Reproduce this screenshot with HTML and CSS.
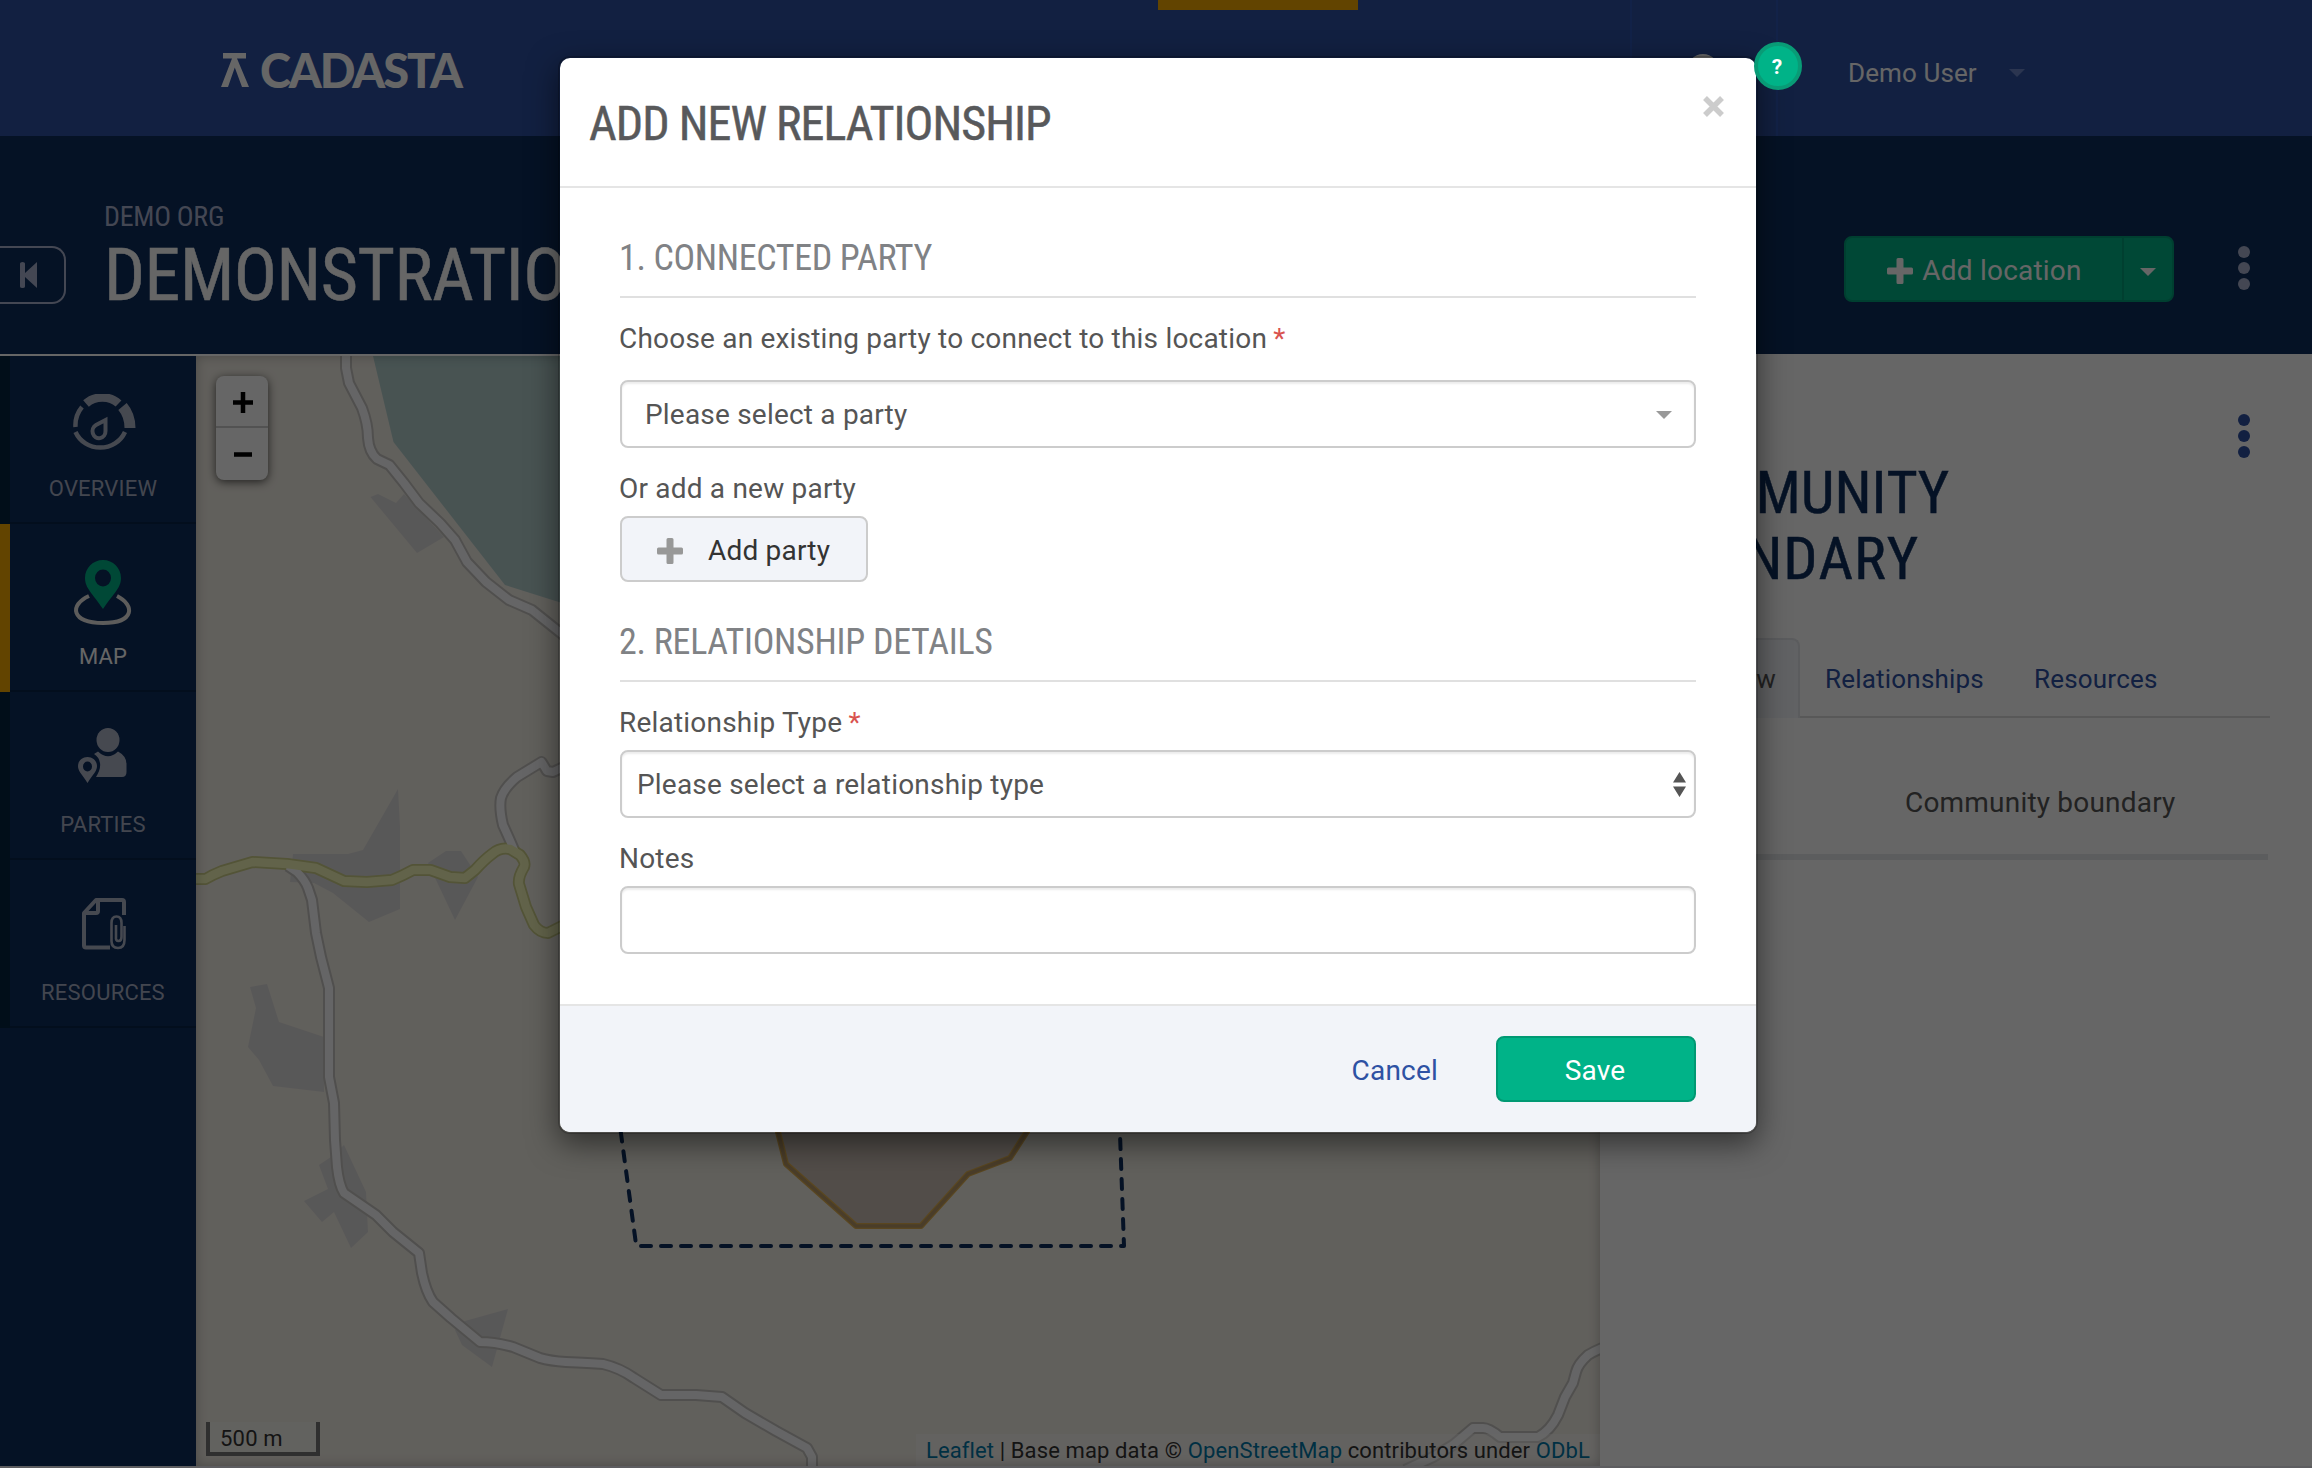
FILE: index.html
```html
<!DOCTYPE html>
<html lang="en">
<head>
<meta charset="utf-8">
<title>Cadasta – Add new relationship</title>
<link rel="stylesheet" href="styles.css">
</head>
<body>
<div class="page">
  <header class="topbar">
    <a class="logo">
      <svg class="logo-mark" width="28" height="34" viewBox="0 0 28 34"><path d="M2 0H25V5.500H2Z M11 5.500H16L28 34H21L13.800 14.500L7 34H0Z" fill="#fff"/></svg>
      <span class="logo-text">CADASTA</span>
    </a>
    <span class="nav-current"></span>
    <span class="nav-lang"><span class="globe"></span></span>
    <span class="nav-user">Demo User<i class="caret caret-user"></i></span>
  </header>

  <section class="project">
    <button class="collapse"><svg width="18" height="26" viewBox="0 0 18 26"><path d="M0 1.500Q0 0 2.500 0T5 1.500V11L17 0V26L5 15V24.500Q5 26 2.500 26T0 24.500Z" fill="#aab2cf"/></svg></button>
    <div class="project-names">
      <div class="org">DEMO ORG</div>
      <h1 class="project-title">DEMONSTRATION</h1>
    </div>
    <div class="split">
      <button class="split-main"><svg width="26" height="26" viewBox="0 0 26 26"><path d="M11 0H15Q16.500 0 16.500 1.500V9.500H24.500Q26 9.500 26 11V15Q26 16.500 24.500 16.500H16.500V24.500Q16.500 26 15 26H11Q9.500 26 9.500 24.500V16.500H1.500Q0 16.500 0 15V11Q0 9.500 1.500 9.500H9.500V1.500Q9.500 0 11 0Z" fill="#fff"/></svg>Add location</button>
      <button class="split-toggle"><i class="caret"></i></button>
    </div>
    <div class="kebab kebab-light"><i></i><i></i><i></i></div>
  </section>

  <main class="content">
    <nav class="sidebar">
      <a class="side-item overview">
        <svg width="63" height="60" viewBox="0 0 63 60" fill="none" stroke="#b0b6c9">
          <path d="M2.500 33A27 28 0 0 1 9 13" stroke-width="4.500"/><path d="M2.500 38A27 26 0 0 0 52 38" stroke-width="4.500"/>
          <path d="M13 9.500C22 1.500 37 1.500 45.500 9.500" stroke-width="8.500"/><path d="M49.500 12.500C55 19 57 25 57 34" stroke-width="11"/>
          <path d="M32.500 26V37A6.500 7 0 1 1 23 31Z" stroke-width="4"/>
        </svg>
        <span>OVERVIEW</span>
      </a>
      <a class="side-item active">
        <svg width="63" height="66" viewBox="0 0 63 66">
          <path d="M17 36C-3 45 -1 63 31 63S63 45 45 36" fill="none" stroke="#e8e6e4" stroke-width="4"/>
          <path fill-rule="evenodd" d="M31 0C41 0 49 8 49 18C49 28 42 33 31 49C20 33 13 28 13 18C13 8 21 0 31 0ZM31 9.500A8 8.500 0 1 0 31 26.500A8 8.500 0 1 0 31 9.500Z" fill="#00b388"/>
        </svg>
        <span>MAP</span>
      </a>
      <a class="side-item parties">
        <svg width="50" height="56" viewBox="0 0 50 56" fill="#b0b6c9">
          <ellipse cx="30" cy="12" rx="11.500" ry="12"/>
          <path d="M16 26L20 23.500Q30 33 40 23.500Q48.500 28 48.500 36V44Q48.500 49 44 49H18Q23 41 22 35Q21 29 16 26Z"/>
          <path fill-rule="evenodd" d="M9.500 29C15 29 19 33 19 38C19 43 16 45 9.500 55C3 45 0 43 0 38C0 33 4 29 9.500 29ZM9.500 33.500A4.500 5 0 1 0 9.500 43.500A4.500 5 0 1 0 9.500 33.500Z"/>
        </svg>
        <span>PARTIES</span>
      </a>
      <a class="side-item resources">
        <svg width="46" height="52" viewBox="0 0 46 52" fill="none" stroke="#b0b6c9" stroke-width="4" stroke-linejoin="round">
          <path d="M28 49.500H4Q2 49.500 2 47.500V15L14 2H40Q42 2 42 4V17"/><path d="M2 15H14Q16 15 16 13V2"/>
          <path d="M42.500 28V42Q42.500 50 36 50T29.500 43V25Q29.500 18.500 34.500 18.500T39.500 25V39Q39.500 43 36.500 43T34 39V27" stroke-width="2.600"/>
        </svg>
        <span>RESOURCES</span>
      </a>
    </nav>

    <section class="map">
      <svg class="map-canvas" width="1404" height="1110" viewBox="196 356 1404 1110" fill="none" stroke-linejoin="round">
        <defs>
          <path id="road-north" d="M346 350L346 368L349 383L362 408Q368 424 368 438Q369 452 377 459L389.500 465L404 483L419 503L440 523L455 540L467 562L486 582L509 600L532 610L562 634L600 665"/>
          <path id="road-south" d="M288 866L297 872Q305 880 308 888L312 900L316 933L321 957L329 988V1077L334 1103L335 1140L337 1167Q339 1185 344 1193L376 1215L393 1232L419 1253L422 1273Q426 1292 433 1302L451 1318L480 1342Q495 1342 513 1347L540 1358Q550 1361 566 1362Q590 1363 603 1364Q620 1368 634 1378L661 1395H696L722 1397L745 1413L776 1431L807 1448L812 1457V1470"/>
          <path id="road-loop" d="M515 852Q509 838 503 825Q499 808 501 798Q504 788 517 777L541.500 762L547 771L553 772L570 764"/>
          <path id="road-east" d="M1610 1345Q1596 1350 1588 1355Q1578 1364 1576 1372L1573 1383L1565 1397L1558 1415Q1550 1431 1538 1437H1500Q1489 1428 1483 1428H1473L1453 1445L1433 1457L1405 1470"/>
          <path id="road-main" d="M190 879H205.500Q212 875 222 871L252.500 862L287 864L316 868L344 881L367 882L392 880Q402 876 413 870H430.500L450 877L465 878L475 870Q484 860 492 854Q500 847 510 849L520 855Q526 862 524 867Q518 877 519 884L526 907L534 925Q540 933 548 933L562 926L600 910"/>
        </defs>
        <rect x="196" y="356" width="1404" height="1110" fill="#f3efe6"/>
        <path d="M373 356L393.500 442L505 585L600 615V356Z" fill="#b3d0ce"/>
        <g fill="#dddcdc">
          <path d="M370.500 497L378 494L396 503L404 494L444 537L417 553Z"/>
          <path d="M293 854H348L363 850L398 789L400 827V909L369 922L333 893L314 883L290 882Z"/>
          <path d="M428 863L446 851H461L478 877L455 920Z"/>
          <path d="M250 987L267 984L279 1022L324 1037V1092L273 1086L259 1060L248 1047L256 1008Z"/>
          <path d="M344 1145L366 1192L368 1232L351 1248L334 1212L322 1222L304 1201L328 1189L319 1165L331 1157Z"/>
          <path d="M508 1309L492 1367L462 1345L455 1330L465 1321Z"/>
        </g>
        <g stroke="#c8c6c2" stroke-width="12"><use href="#road-north"/><use href="#road-south"/><use href="#road-loop"/><use href="#road-east"/></g>
        <use href="#road-main" stroke="#cfd18a" stroke-width="12"/>
        <g stroke="#fdfdfe" stroke-width="8"><use href="#road-north"/><use href="#road-south"/><use href="#road-loop"/><use href="#road-east"/></g>
        <use href="#road-main" stroke="#f5f8ba" stroke-width="8.500"/>
        <path d="M770 1100L778 1132L786 1164L856 1226H921L968 1174L1010 1158L1028 1130L1045 1100Z" fill="#cdc0b6" stroke="#e0b050" stroke-width="6"/>
        <path d="M770 1100L778 1132L786 1164L856 1226H921L968 1174L1010 1158L1028 1130L1045 1100Z" stroke="#b89a66" stroke-width="3.500"/>
        <g stroke="#0d2d5c" stroke-width="4" stroke-dasharray="10 10" stroke-linecap="round">
          <path d="M641 1246H1124L1117 1050"/><path d="M635.500 1240.500L611 1060"/>
        </g>
      </svg>
      <div class="map-zoom"><button>
        <svg width="20" height="21" viewBox="0 0 20 21"><path d="M0 10.500H20M10 0V21" stroke="#000" stroke-width="4.500"/></svg></button><button>
        <svg width="20" height="21" viewBox="0 0 20 21"><path d="M1 10.500H19" stroke="#000" stroke-width="4.500"/></svg></button></div>
      <div class="map-scale">500 m</div>
      <div class="map-credit"><a>Leaflet</a> | Base map data © <a>OpenStreetMap</a> contributors under <a>ODbL</a></div>
    </section>

    <aside class="detail">
      <div class="detail-head">
        <div>
          <div class="detail-kind">LOCATION</div>
          <h2 class="detail-title">COMMUNITY<br><span class="detail-title-end">BOUNDARY</span></h2>
        </div>
        <div class="kebab kebab-blue"><i></i><i></i><i></i></div>
      </div>
      <div class="tabs"><a class="tab current">Overview</a><a class="tab">Relationships</a><a class="tab">Resources</a></div>
      <div class="attr"><span class="attr-name">Type</span><span>Community boundary</span></div>
    </aside>
  </main>
</div>

<div class="backdrop">
  <div class="modal">
    <div class="modal-head">
      <h3>ADD NEW RELATIONSHIP</h3>
      <svg class="close" width="21" height="21" viewBox="0 0 21 21"><path d="M2 2L19 19M19 2L2 19" stroke="#ccc" stroke-width="5.500"/></svg>
    </div>
    <div class="modal-body">
      <h4>1. CONNECTED PARTY</h4>
      <label class="label-wide">Choose an existing party to connect to this location <em>*</em></label>
      <div class="field field-combo">Please select a party<i class="caret"></i></div>
      <label>Or add a new party</label>
      <button class="btn btn-add"><svg width="26" height="26" viewBox="0 0 26 26"><path d="M11 0H15Q16.500 0 16.500 1.500V9.500H24.500Q26 9.500 26 11V15Q26 16.500 24.500 16.500H16.500V24.500Q16.500 26 15 26H11Q9.500 26 9.500 24.500V16.500H1.500Q0 16.500 0 15V11Q0 9.500 1.500 9.500H9.500V1.500Q9.500 0 11 0Z" fill="#989898"/></svg>Add party</button>
      <h4 class="second">2. RELATIONSHIP DETAILS</h4>
      <label>Relationship Type <em>*</em></label>
      <div class="field field-select">Please select a relationship type<svg width="13" height="25" viewBox="0 0 13 25"><path d="M6.500 0L13 10.500H0ZM6.500 25L13 14.500H0Z" fill="#555"/></svg></div>
      <label>Notes</label>
      <div class="field"></div>
    </div>
    <div class="modal-foot">
      <a class="cancel">Cancel</a>
      <button class="btn btn-save">Save</button>
    </div>
  </div>
  <div class="help">?</div>
</div>
</body>
</html>
```
FILE: styles.css
```css
* { box-sizing: border-box; }
body {
  margin: 0;
  font: 400 28px/40px Roboto, sans-serif;
  letter-spacing: .2px;
  color: #555;
}
h1, h2, h3, h4 { margin: 0; font-family: "Roboto Condensed", Roboto, sans-serif; font-weight: 400; letter-spacing: 0; }
h1, h2, h3 { -webkit-text-stroke: .5px currentColor; }
button { margin: 0; padding: 0; border: 0; background: none; font: inherit; letter-spacing: inherit; color: inherit; }
svg { display: block; flex: none; }
em { font-style: normal; color: #d9534f; }

.page { width: 2312px; height: 1468px; display: flex; flex-direction: column; overflow: hidden; background: #e9e9f0; }
.caret { display: block; width: 0; height: 0; border: 8px solid transparent; border-top-color: #fff; border-bottom: 0; }

/* top bar */
.topbar { height: 136px; flex: none; display: flex; background: #2d50a3; color: #fff; }
.logo { width: 1158px; padding: 53px 0 0 221px; display: flex; gap: 11px; flex: none; }
.logo-text { font: 900 47px/35px Lato, sans-serif; letter-spacing: -2.100px; }
.nav-current { width: 200px; height: 10px; background: #f5ab00; flex: none; }
.nav-lang { margin-left: 272px; width: 148px; flex: none; border: solid #2f55b4; border-width: 0 2px; padding: 54px 0 0 55px; }
.globe { display: block; width: 32px; height: 32px; border-radius: 50%; background: #fff; }
.nav-user { display: flex; align-items: center; gap: 32px; margin: 10px 0 0 70px; font-size: 26px; letter-spacing: .1px; }
.caret-user { border-top-color: #6c86c8; }

/* project header */
.project { height: 220px; flex: none; display: flex; background: #0d2d5c; border-bottom: 2px solid #fff; color: #fff; }
.collapse { width: 66px; height: 58px; margin-top: 110px; border: solid #aab2cf; border-width: 2px 2px 2px 0; border-radius: 0 14px 14px 0; padding-left: 20px; }
.project-names { width: 1778px; padding: 57px 0 0 38px; }
.org { font: 400 28px/48px "Roboto Condensed", Roboto, sans-serif; color: #aab2cf; letter-spacing: -.3px; }
.project-title { font-size: 72px; line-height: 70px; letter-spacing: -.5px; }
.split { display: flex; height: 66px; margin-top: 100px; background: #00b388; border: 2px solid #009e78; border-radius: 8px; }
.split-main { width: 278px; display: flex; align-items: center; justify-content: center; gap: 9px; padding: 3px 0 0 1px; border-right: 2px solid #009e78; }
.split-toggle { width: 48px; padding: 5px 0 0 16px; }
.kebab { display: flex; flex-direction: column; gap: 4px; }
.kebab i { width: 12px; height: 12px; border-radius: 50%; background: #aab2cf; }
.kebab-light { margin: 110px 0 0 64px; }
.kebab-blue i { background: #2d50a3; }

/* body columns */
.content { display: flex; height: 1110px; }
.sidebar { width: 196px; flex: none; background: #0d2d5c; }
.side-item { height: 168px; display: flex; flex-direction: column; justify-content: space-between; align-items: center; padding: 38px 0 24px; border-left: 10px solid #04233f; box-shadow: inset 0 -2px #08234a; font-size: 22px; line-height: 22px; color: #a9b0c6; }
.side-item.active { border-left-color: #f5ab00; padding-top: 36px; color: #fff; }
.overview svg, .resources svg { margin-left: 3px; }
.parties { padding-top: 36px; }
.resources { padding-top: 38px; }

/* map */
.map { position: relative; width: 1404px; flex: none; }
.map::after { content: ""; position: absolute; inset: 0; box-shadow: inset 0 0 12px rgba(0, 0, 0, .25); }
.map-zoom { position: absolute; left: 20px; top: 20px; width: 52px; height: 104px; border-radius: 8px; background: #fff; box-shadow: 0 2px 10px rgba(0, 0, 0, .65); }
.map-zoom button { display: flex; width: 52px; height: 52px; align-items: center; justify-content: center; padding: 0 0 0 2px; }
.map-zoom button:first-child { border-bottom: 2px solid #ccc; padding-top: 3px; }
.map-scale { position: absolute; left: 10px; bottom: 10px; width: 114px; height: 34px; border: 4px solid #777; border-top: 0; padding-left: 10px; background: rgba(255, 255, 255, .3); font-size: 22px; line-height: 33px; color: #333; }
.map-credit { position: absolute; right: 0; bottom: 0; height: 32px; padding: 0 10px; background: rgba(255, 255, 255, .4); font-size: 22px; line-height: 34px; letter-spacing: .12px; color: #333; white-space: nowrap; }
.map-credit a { color: #0078a8; }

/* detail panel */
.detail { width: 712px; background: #fff; padding: 54px 42px 0 40px; }
.detail-head { display: flex; justify-content: space-between; padding-right: 20px; }
.detail-kind { font: 400 28px/60px "Roboto Condensed", Roboto, sans-serif; letter-spacing: 0; }
.detail-title { font-size: 60px; line-height: 66px; color: #0d2d5c; margin-top: -10px; font-kerning: none; }
.detail-title-end { letter-spacing: .9px; }
.kebab-blue { margin-top: 4px; }
.tabs { display: flex; margin-top: 46px; height: 80px; border-bottom: 2px solid #ddd; font-size: 26px; letter-spacing: .2px; color: #2d50a3; }
.tab { padding: 21px 25px 0; height: 80px; }
.tab.current { width: 160px; padding: 19px 22px 0 0; text-align: right; background: #f2f4f9; border: 2px solid #e4e6ea; border-bottom: 0; border-radius: 8px 8px 0 0; color: #555; }
.attr { display: flex; width: 628px; height: 142px; padding: 65px 0 0; border-bottom: 6px solid #e6e8ec; }
.attr-name { width: 265px; }

/* modal */
.backdrop { position: absolute; inset: 0; height: 1468px; background: rgba(0, 0, 0, .6); }
.modal { width: 1200px; margin: 56px 0 0 558px; border: 2px solid rgba(0, 0, 0, .2); border-radius: 12px; background: #fff; background-clip: padding-box; box-shadow: 0 10px 30px rgba(0, 0, 0, .5); overflow: hidden; }
.modal-head { height: 130px; padding: 38px 32px 0 29px; border-bottom: 2px solid #e5e5e5; display: flex; justify-content: space-between; }
.modal-head h3 { font-size: 48px; line-height: 56px; letter-spacing: -.95px; color: #58595b; }
.modal-body { padding: 49px 60px 50px; display: flex; flex-direction: column; }
h4 { height: 61px; border-bottom: 2px solid #e0e0e0; margin-bottom: 20px; font-size: 36px; line-height: 42px; letter-spacing: -.35px; text-indent: -1px; color: #808285; }
.second { margin-top: 39px; letter-spacing: -.28px; }
label { height: 40px; margin: 0 0 8px -1px; line-height: 42px; }
label em { margin-left: -1px; }
.label-wide { margin-bottom: 22px; }
.field { height: 68px; margin-bottom: 20px; border: 2px solid #ccc; border-radius: 8px; box-shadow: inset 0 2px 2px rgba(0, 0, 0, .075); display: flex; align-items: center; justify-content: space-between; line-height: 42px; padding-top: 1px; }
.field:last-child { margin-bottom: 0; }
.field-combo { padding: 2px 22px 0 23px; }
.field-combo .caret { border-top-color: #999; }
.field-select { padding: 1px 8px 0 15px; }
.btn { height: 66px; border: 2px solid #ccc; border-radius: 8px; display: flex; align-items: center; padding-top: 3px; }
.btn-add { width: 248px; padding-left: 35px; gap: 25px; background: #f2f4f9; color: #333; }
.modal-foot { height: 128px; padding: 30px 60px; border-top: 2px solid #e5e5e5; background: #f2f4f9; display: flex; justify-content: flex-end; align-items: center; gap: 58px; }
.cancel { padding-top: 3px; color: #2e51a3; }
.btn-save { width: 200px; justify-content: center; padding-right: 2px; background: #00b388; border-color: #009973; color: #fff; }
.help { position: absolute; left: 1754px; top: 42px; width: 48px; height: 48px; border: 4px solid #099b76; border-radius: 50%; background: #00b388; color: #fff; font-size: 21px; font-weight: 700; line-height: 43px; text-align: center; padding-right: 2px; }
```
